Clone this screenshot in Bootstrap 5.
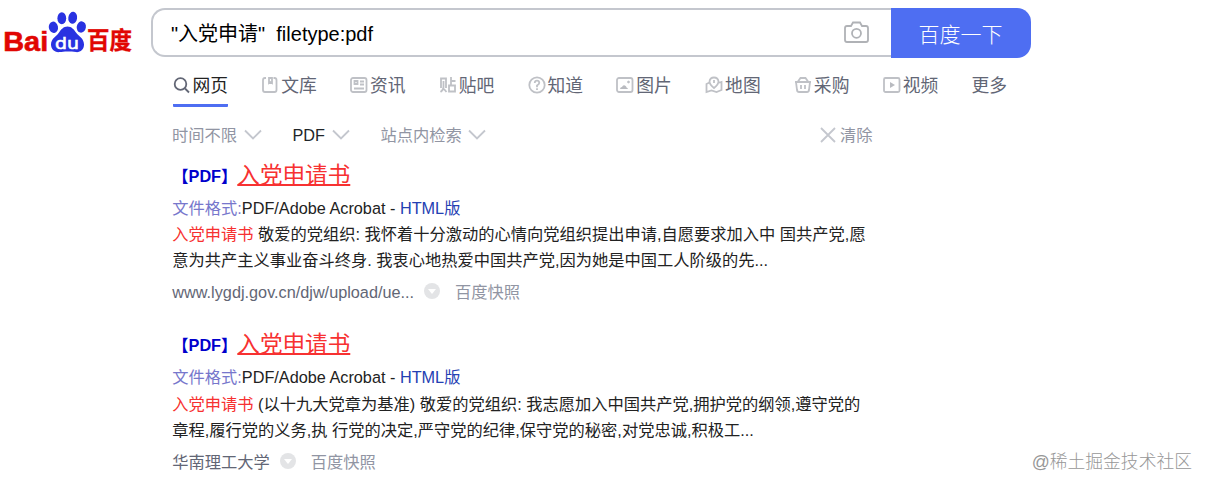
<!DOCTYPE html>
<html lang="zh-CN">
<head>
  <meta charset="UTF-8">
  <title>"入党申请" filetype:pdf_百度搜索</title>
  <meta name="viewport" content="width=device-width, initial-scale=1.0">
  <!-- Bootstrap 5 CDN -->
  <link href="https://cdn.jsdelivr.net/npm/bootstrap@5.3.2/dist/css/bootstrap.min.css" rel="stylesheet">
  <style>
    body {
      background-color: #fff;
      color: #222;
      font-family: "Liberation Sans", "Noto Sans CJK SC", sans-serif;
      font-size: 16.25px;
      height: 488px;
      overflow: hidden;
    }
    svg {
      flex-shrink: 0;
      fill: none;
      stroke: #bfc1c6;
      stroke-width: 1.8;
    }
    a {
      text-decoration: none;
    }

    /* Header */
    .search-header {
      padding: 8px 0 0 4px;
      height: 58px;
    }
    .site-logo {
      margin-right: 17px;
    }
    .site-logo svg {
      stroke: none;
    }
    .search-form {
      width: 880px;
      height: 50px;
    }
    .search-box {
      height: 49px;
      border: 2px solid #c4c7ce;
      border-right: 0;
      border-radius: 14px 0 0 14px;
      padding: 0 21px 0 18px;
      font-size: 20px;
      color: #000;
      white-space: pre;
    }
    .search-box span {
      padding-top: 2px;
    }
    .search-box svg {
      stroke: #b0b2b6;
    }
    .search-btn {
      width: 140px;
      height: 50px;
      border-radius: 0 14px 14px 0;
      background-color: #4e6ef2;
      color: #fff;
      font-size: 21px;
      font-weight: 300;
      padding: 4px 1px 0 0;
      border: 0;
    }

    /* Tabs and filters */
    .search-main {
      padding-left: 172px;
    }
    .search-tabs {
      height: 49px;
      gap: 33.2px;
      font-size: 17.8px;
    }
    .search-tabs a {
      display: flex;
      align-items: center;
      height: 56px;
      color: #626675;
      white-space: nowrap;
    }
    .search-tabs svg {
      width: 20px;
      height: 18px;
      padding-right: 2px;
      margin-bottom: 3px;
    }
    .search-tabs .tab-current {
      color: #222;
      border-bottom: 3px solid #4e6ef2;
      height: 49px;
      padding-top: 10px;
      border-radius: 1px;
      margin-left: 0.5px;
    }
    .filter-row {
      width: 700.5px;
      height: 56px;
      color: #9195a3;
    }
    .filter-row svg {
      stroke: #c4c7ce;
    }
    .filter-row .filter-arrow {
      margin: 0 31px 0 6.5px;
    }

    /* Results */
    .result-item {
      height: 169px;
      padding-left: 0.3px;
    }
    .result-title {
      height: 33px;
      line-height: 27px;
      font-size: 22.6px;
      margin: -1px 0 0;
      font-weight: 400;
    }
    .result-item + .result-item .result-title {
      margin-top: 0;
    }
    .result-title .file-tag {
      font-size: 16.25px;
      font-weight: 700;
      color: #0000cc;
      position: relative;
      top: -1px;
    }
    .result-title a {
      color: #f73131;
      text-decoration: underline;
      text-decoration-thickness: 2px;
      text-underline-offset: 1px;
    }
    .result-line {
      line-height: 26px;
      margin: 0;
      white-space: nowrap;
    }
    .result-item + .result-item .result-snippet {
      padding-top: 1px;
    }
    .format-label {
      color: #7777cc;
    }
    .html-link {
      color: #2440b3;
    }
    .hit-word {
      color: #f73131;
    }
    .result-source {
      height: 38px;
      color: #626675;
    }
    .result-source a {
      color: #9195a3;
    }
    .source-arrow {
      margin: 0 15px 2px 10px;
      stroke: none;
    }
    .source-arrow circle {
      fill: #e3e4e6;
    }
    .source-arrow path {
      fill: #fff;
    }
    .site-watermark {
      right: 16px;
      bottom: 14px;
      color: #979797;
      font-size: 17.8px;
      font-weight: 300;
      line-height: 24px;
    }
  </style>
</head>
<body>

<!-- Header -->
<header class="search-header d-flex">
  <a class="site-logo" href="#">
    <svg class="d-block" width="130" height="50" viewBox="4 8 130 50">
      <g fill="#e10602" font-weight="700">
        <text x="3.2" y="50.5" font-size="28" font-family="Liberation Sans, sans-serif" stroke="#e10602" stroke-width=".6" textLength="45" lengthAdjust="spacingAndGlyphs">Bai</text>
        <text x="87" y="49" font-size="23.5" font-family="Noto Sans CJK SC, sans-serif" stroke="#e10602" stroke-width=".4" textLength="45" lengthAdjust="spacingAndGlyphs">百度</text>
      </g>
      <g fill="#2932e1">
        <ellipse cx="53.4" cy="27.3" rx="4.6" ry="5.7" transform="rotate(-10 53.4 27.3)"/>
        <ellipse cx="61.8" cy="18.2" rx="4.4" ry="6"/>
        <ellipse cx="72.7" cy="17.8" rx="4.4" ry="6" transform="rotate(8 72.7 17.8)"/>
        <ellipse cx="81.3" cy="27" rx="4.6" ry="5.7" transform="rotate(10 81.3 27)"/>
        <path d="M67.5 26.5c4 0 6.500 3 8.500 6 3 4 8 6 8 12 0 5-3.500 8-8 7.600-3-.4-5-.6-8.500-.6s-5.500.3-8 .6c-5 .500-8.500-3-8.500-7.600 0-6 5.500-8 8-12 2-3 4.500-6 8.500-6z"/>
        <text x="55" y="48.500" font-size="16.500" font-family="DejaVu Sans, sans-serif" font-weight="400" fill="#fff" stroke="#fff" stroke-width=".6" textLength="24" lengthAdjust="spacingAndGlyphs">du</text>
      </g>
    </svg>
  </a>
  <form class="search-form d-flex">
    <div class="search-box d-flex flex-grow-1 align-items-center justify-content-between">
      <span>"入党申请"  filetype:pdf</span>
      <svg width="27" height="23" viewBox="0 0 27 23" stroke-width="2"><path d="M4 5h4l2-3.500h7L19 5h4q2 0 2 2v12q0 2-2 2H4q-2 0-2-2V7q0-2 2-2z"/><circle cx="13.500" cy="12.300" r="4.500"/></svg>
    </div>
    <button class="search-btn btn" type="button">百度一下</button>
  </form>
</header>

<main class="search-main">
  <!-- Tabs -->
  <nav class="search-tabs d-flex">
    <a class="tab-current" href="#"><svg viewBox="0 0 18 18" style="stroke:#626675"><circle cx="7.500" cy="8" r="5.800"/><path d="M12 12.500l4 4"/></svg>网页</a>
    <a href="#"><svg viewBox="0 0 18 18"><path d="M5 2H4Q2 2 2 4v10q0 2 2 2h9.500q2 0 2-2V4q0-2-2-2h-1M8 2v5l1.500-1L11 7V2z"/></svg>文库</a>
    <a href="#"><svg viewBox="0 0 18 18"><rect x="1" y="2" width="15.500" height="14" rx="2"/><path d="M4.500 5h3v3h-3zM10 5.500h4M10 8.500h4M4 12.500h10"/></svg>资讯</a>
    <a href="#"><svg viewBox="0 0 18 18"><path d="M2 12V2.500h5V12M4.500 5v6q0 3-3 5M5 13l2.500 3M12 1v8M12 5h4.500M10 9.500h6v6h-6z"/></svg>贴吧</a>
    <a href="#"><svg viewBox="0 0 18 18"><circle cx="9" cy="9" r="7.700"/><path d="M6.700 7q.2-2.300 2.300-2.300t2.300 2.100q0 1.300-2.300 2.700v1.700M9 12.300V14"/></svg>知道</a>
    <a href="#"><svg viewBox="0 0 18 18"><rect x="1" y="2" width="15.500" height="14" rx="2"/><path d="M4 13q.3-2 2-2 1-2.500 3-1.500 1.500 1 1.500 2 1 .3 1.500 1.500z" fill="#b9bbc0" stroke="none"/><circle cx="12.500" cy="6" r="1" fill="#b9bbc0" stroke-width=".8"/></svg>图片</a>
    <a href="#"><svg viewBox="0 0 18 18"><path d="M4.500 6.500L1.500 8v8l5-1.500 5 1.500 5-2V6l-3.500 1M9 12Q4.500 8.500 4.500 5.500 5 1.500 9 1.500t4.500 4Q13.500 8.500 9 12zM9 4v3"/></svg>地图</a>
    <a href="#"><svg viewBox="0 0 18 18"><path d="M1 6h16M2 6l1 8q.3 2 2 2h8q1.700 0 2-2l1-8M4 5.500L6.500 2h5L14 5.500M7 9v4M11 9v4"/></svg>采购</a>
    <a href="#"><svg viewBox="0 0 18 18"><rect x="1" y="2" width="15.500" height="14" rx="1.500"/><path d="M7 6l5 3-5 3z" fill="#b9bbc0" stroke="none"/></svg>视频</a>
    <a href="#">更多</a>
  </nav>

  <!-- Filters -->
  <div class="filter-row d-flex align-items-center">
    <span>时间不限</span>
    <svg width="18" height="12" viewBox="0 0 18 12" class="filter-arrow"><path d="M1 1.500l8 8 8-8"/></svg>
    <span class="text-dark">PDF</span>
    <svg width="18" height="12" viewBox="0 0 18 12" class="filter-arrow"><path d="M1 1.500l8 8 8-8"/></svg>
    <span>站点内检索</span>
    <svg width="18" height="12" viewBox="0 0 18 12" class="filter-arrow"><path d="M1 1.500l8 8 8-8"/></svg>
    <svg width="16" height="16" viewBox="0 0 16 16" class="ms-auto"><path d="M1 1l14 14M15 1L1 15"/></svg>
    <span class="ps-1">清除</span>
  </div>

  <!-- Results -->
  <article class="result-item">
    <h3 class="result-title"><span class="file-tag">【PDF】</span><a href="#">入党申请书</a></h3>
    <p class="result-line"><span class="format-label">文件格式:</span>PDF/Adobe Acrobat - <a class="html-link" href="#">HTML版</a></p>
    <p class="result-line result-snippet"><span class="hit-word">入党申请书</span> 敬爱的党组织: 我怀着十分激动的心情向党组织提出申请,自愿要求加入中 国共产党,愿<br>意为共产主义事业奋斗终身. 我衷心地热爱中国共产党,因为她是中国工人阶级的先...</p>
    <div class="result-source d-flex align-items-center">
      <span>www.lygdj.gov.cn/djw/upload/ue...</span>
      <svg width="16" height="16" viewBox="0 0 16 16" class="source-arrow"><circle cx="8" cy="8" r="8"/><path d="M4 6h8l-4 5z"/></svg>
      <a href="#">百度快照</a>
    </div>
  </article>
  <article class="result-item">
    <h3 class="result-title"><span class="file-tag">【PDF】</span><a href="#">入党申请书</a></h3>
    <p class="result-line"><span class="format-label">文件格式:</span>PDF/Adobe Acrobat - <a class="html-link" href="#">HTML版</a></p>
    <p class="result-line result-snippet"><span class="hit-word">入党申请书</span> (以十九大党章为基准) 敬爱的党组织: 我志愿加入中国共产党,拥护党的纲领,遵守党的<br>章程,履行党的义务,执 行党的决定,严守党的纪律,保守党的秘密,对党忠诚,积极工...</p>
    <div class="result-source d-flex align-items-center">
      <span>华南理工大学</span>
      <svg width="16" height="16" viewBox="0 0 16 16" class="source-arrow"><circle cx="8" cy="8" r="8"/><path d="M4 6h8l-4 5z"/></svg>
      <a href="#">百度快照</a>
    </div>
  </article>
</main>

<div class="site-watermark position-absolute">@稀土掘金技术社区</div>

<!-- Bootstrap JS -->
<script src="https://cdn.jsdelivr.net/npm/bootstrap@5.3.2/dist/js/bootstrap.bundle.min.js"></script>
</body>
</html>
